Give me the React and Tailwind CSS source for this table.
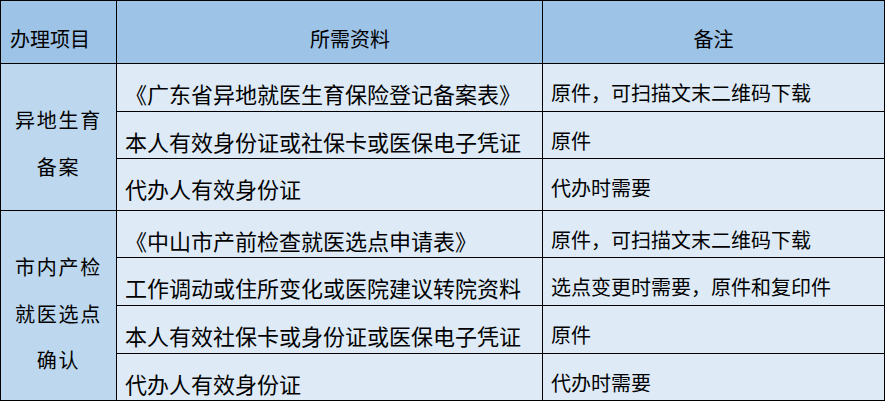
const rows = [
  { doc: '《广东省异地就医生育保险登记备案表》', note: '原件，可扫描文末二维码下载' },
  { doc: '本人有效身份证或社保卡或医保电子凭证', note: '原件' },
  { doc: '代办人有效身份证', note: '代办时需要' },
];

const rows2 = [
  { doc: '《中山市产前检查就医选点申请表》', note: '原件，可扫描文末二维码下载' },
  { doc: '工作调动或住所变化或医院建议转院资料', note: '选点变更时需要，原件和复印件' },
  { doc: '本人有效社保卡或身份证或医保电子凭证', note: '原件' },
  { doc: '代办人有效身份证', note: '代办时需要' },
];

function Row({ doc, note }) {
  return (
    <>
      <div className="border-r border-b border-black bg-[#deebf7] pl-2 pt-[18px] text-[22px] leading-none whitespace-nowrap">
        {doc}
      </div>
      <div className="border-r border-b border-black bg-[#deebf7] pl-2 pt-[19px] text-[20px] leading-none whitespace-nowrap">
        {note}
      </div>
    </>
  );
}

export default function App() {
  return (
    <div className="bg-white w-[886px] h-[402px] text-black font-['Noto_Sans_CJK_SC',sans-serif]">
      <div className="grid w-[885px] grid-cols-[116px_426px_342px] grid-rows-[63px_48px_47px_52px_47px_48px_48px_47px] border-l border-t border-black">
        <div className="border-r border-b border-black bg-[#9dc3e6] pl-[9px] pt-[28px] text-[20px] leading-none">
          办理项目
        </div>
        <div className="border-r border-b border-black bg-[#9dc3e6] pl-[193px] pt-[28px] text-[20px] leading-none">
          所需资料
        </div>
        <div className="border-r border-b border-black bg-[#9dc3e6] pt-[28px] text-center text-[20px] leading-none">
          备注
        </div>

        <div className="row-span-3 border-r border-b border-black bg-[#bdd7ee] pt-[33px] text-center text-[20px] leading-[46.5px] tracking-[1.75px]">
          <div>异地生育</div>
          <div>备案</div>
        </div>
        {rows.map((r, i) => (
          <Row key={i} {...r} />
        ))}

        <div className="row-span-4 border-r border-b border-black bg-[#bdd7ee] pt-[33px] text-center text-[20px] leading-[46.5px] tracking-[1.75px]">
          <div>市内产检</div>
          <div>就医选点</div>
          <div>确认</div>
        </div>
        {rows2.map((r, i) => (
          <Row key={i} {...r} />
        ))}
      </div>
    </div>
  );
}
